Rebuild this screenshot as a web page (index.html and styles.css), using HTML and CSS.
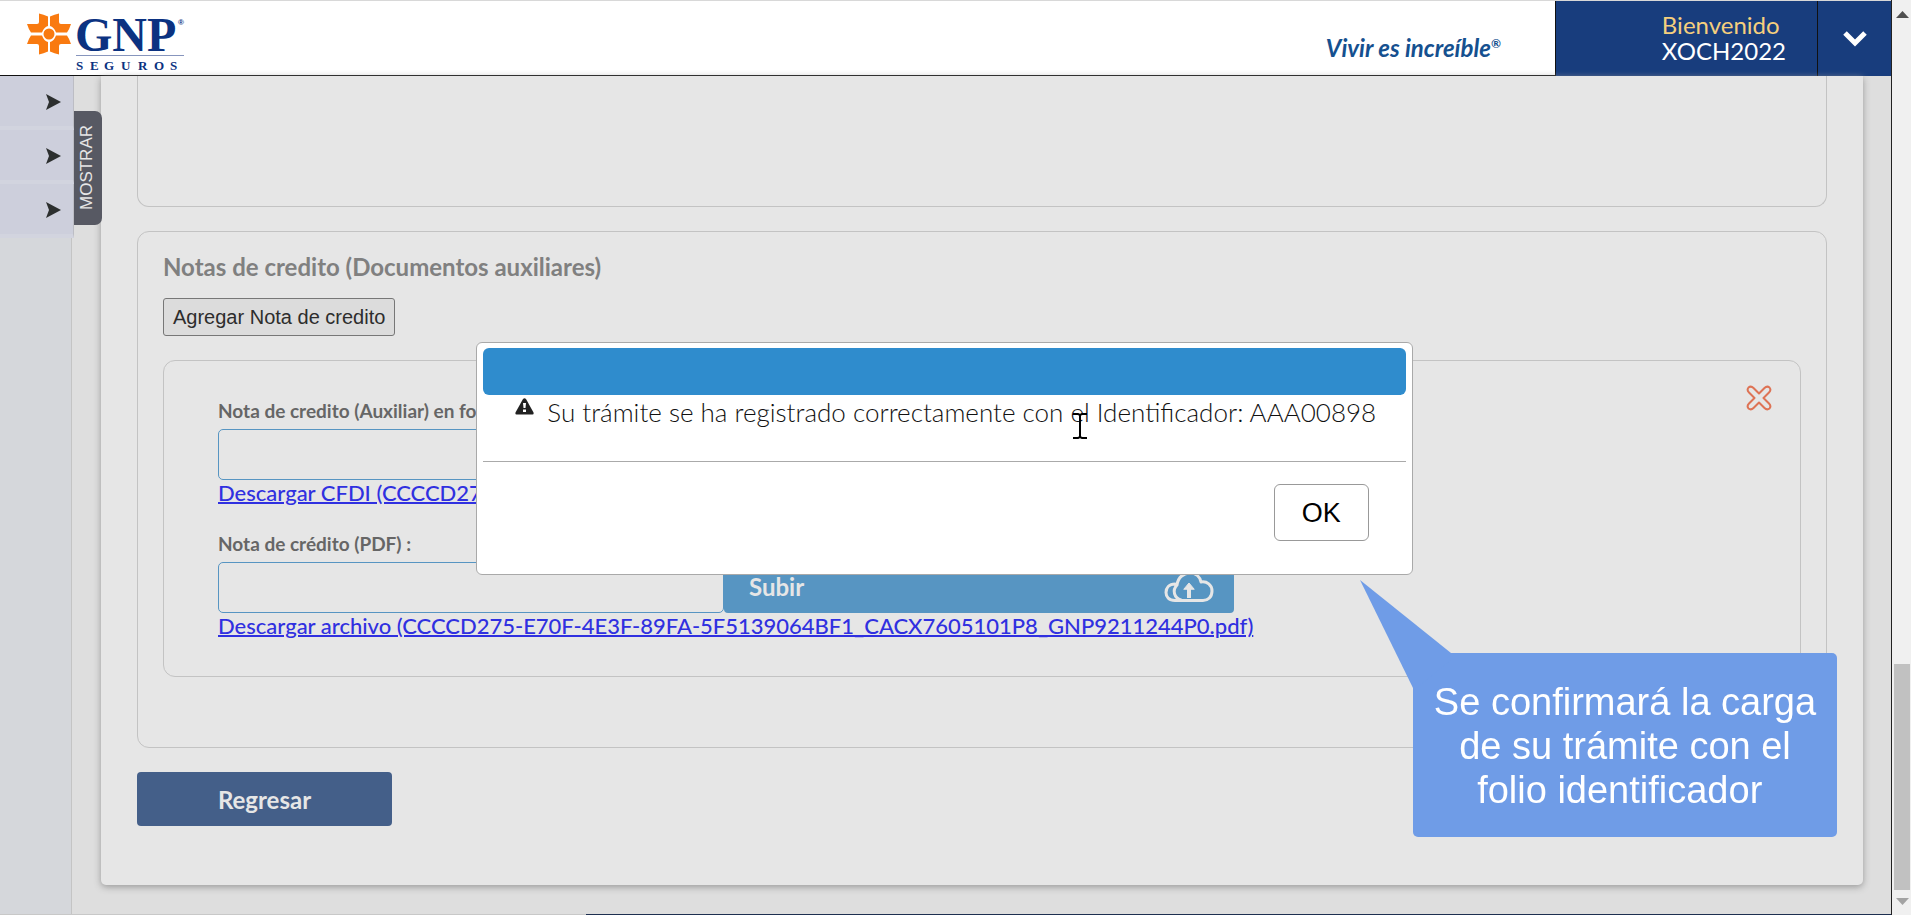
FILE: index.html
```html
<!DOCTYPE html>
<html lang="es">
<head>
<meta charset="utf-8">
<title>GNP Seguros</title>
<link rel="stylesheet" href="styles.css">
</head>
<body>
<div class="app">
  <div class="view">
    <header class="topbar">
      <svg class="logo" viewBox="0 0 160 66" role="img" aria-label="GNP Seguros">
        <g fill="#f97a10" transform="translate(22 26)">
          <path d="M-10-20.500Q-5.500-19.500-1-17.500V-8Q-5-7-7-1.500H-18Q-20.500-5-22-10H-12Q-10-10-10-12Z"/>
          <path transform="scale(-1 1)" d="M-10-20.500Q-5.500-19.500-1-17.500V-8Q-5-7-7-1.500H-18Q-20.500-5-22-10H-12Q-10-10-10-12Z"/>
          <path transform="scale(1 -1)" d="M-10-20.500Q-5.500-19.500-1-17.500V-8Q-5-7-7-1.500H-18Q-20.500-5-22-10H-12Q-10-10-10-12Z"/>
          <path transform="scale(-1 -1)" d="M-10-20.500Q-5.500-19.500-1-17.500V-8Q-5-7-7-1.500H-18Q-20.500-5-22-10H-12Q-10-10-10-12Z"/>
          <circle r="5.500"/>
        </g>
        <text class="logo-name" x="48" y="43">GNP</text>
        <text class="logo-mark" x="151" y="17">®</text>
        <path d="M49 47.500H157" stroke="#8795bd"/>
        <text class="logo-sub" x="49 63 77 94 111 127 143" y="62">SEGUROS</text>
      </svg>
      <span class="slogan">Vivir es increíble<sup>®</sup></span>
      <div class="user">
        <div class="user-name"><span class="welcome">Bienvenido</span><span>XOCH2022</span></div>
        <button class="user-menu" aria-label="Menú de usuario">
          <svg width="26" height="18" viewBox="0 0 26 18"><path d="M3 3L13 13L23 3" fill="none" stroke="#fff" stroke-width="5"/></svg>
        </button>
      </div>
    </header>
    <div class="body">
      <nav class="sidebar">
        <button class="side-item" aria-label="Menú 1"><svg width="16" height="16" viewBox="0 0 16 16"><path d="M1 0L16 8L1 16L4 8Z"/></svg></button>
        <button class="side-item" aria-label="Menú 2"><svg width="16" height="16" viewBox="0 0 16 16"><path d="M1 0L16 8L1 16L4 8Z"/></svg></button>
        <button class="side-item" aria-label="Menú 3"><svg width="16" height="16" viewBox="0 0 16 16"><path d="M1 0L16 8L1 16L4 8Z"/></svg></button>
        <button class="side-tab">MOSTRAR</button>
      </nav>
      <main class="card">
        <section class="panel panel-cut"></section>
        <section class="panel panel-notes">
          <h2 class="title">Notas de credito (Documentos auxiliares)</h2>
          <button class="add">Agregar Nota de credito</button>
          <div class="note">
            <div class="fields">
              <div class="field">
                <label for="cfdi">Nota de credito (Auxiliar) en formato XML :</label>
                <div class="upload">
                  <input id="cfdi" type="text">
                  <button class="subir">Subir
                    <svg width="50" height="32" viewBox="0 0 50 32"><use href="#cloud"/></svg>
                  </button>
                </div>
                <a href="#">Descargar CFDI (CCCCD275-E70F-4E3F-89FA-5F5139064BF1.xml)</a>
              </div>
              <div class="field">
                <label for="pdf">Nota de crédito (PDF) :</label>
                <div class="upload">
                  <input id="pdf" type="text">
                  <button class="subir">Subir
                    <svg width="50" height="32" viewBox="0 0 50 32">
                      <g id="cloud" fill="none" stroke="#e6e6e6" stroke-width="3" stroke-linecap="round" stroke-linejoin="round">
                        <path d="M17 29C10 27 8 19 13 14C14 6 20 2 26 2C32 2 36 6 37 11C43 10 48 14 48 20C48 26 44 29.500 39 29.500H11C5 29.500 2 26 2 21.500C2 17 5 13 11 13"/>
                        <path d="M25 27V15" stroke-width="4" stroke-linecap="butt"/>
                        <path d="M20 18L25 12L30 18Z" fill="#e6e6e6" stroke-width="1"/>
                      </g>
                    </svg>
                  </button>
                </div>
                <a href="#">Descargar archivo (CCCCD275-E70F-4E3F-89FA-5F5139064BF1_CACX7605101P8_GNP9211244P0.pdf)</a>
              </div>
            </div>
            <button class="remove" aria-label="Eliminar">
              <svg width="26" height="26" viewBox="0 0 26 26"><path d="M2.500 2.500Q5 .5 7.500 3L13 8.500L18.500 3Q21 .5 23.500 2.500Q25.500 5 23 7.500L17.500 13L23 18.500Q25.500 21 23.500 23.500Q21 25.500 18.500 23L13 17.500L7.500 23Q5 25.500 2.500 23.500Q.5 21 3 18.500L8.500 13L3 7.500Q.5 5 2.500 2.500Z" fill="none" stroke="#de7355" stroke-width="2" stroke-linejoin="round"/></svg>
            </button>
          </div>
        </section>
        <button class="back">Regresar</button>
      </main>
    </div>
    <div class="status"></div>
  </div>
  <div class="scroll" aria-hidden="true">
    <svg width="13" height="7" viewBox="0 0 13 7"><path d="M0 7L6.500 0L13 7Z" fill="#505050"/></svg>
    <div class="thumb"></div>
    <svg width="13" height="7" viewBox="0 0 13 7"><path d="M0 0L6.500 7L13 0Z" fill="#a3a3a3"/></svg>
  </div>
</div>

<div class="overlay">
  <div class="modal" role="dialog" aria-modal="true" aria-labelledby="msg">
    <div class="modal-head"></div>
    <div class="modal-body">
      <svg width="19" height="17" viewBox="0 0 19 17"><path d="M8 1Q9.500-.5 11 1L18.500 14.500Q19 16.500 17.500 16.500H1.500Q0 16.500.5 14.500Z" fill="#222"/><path d="M8 5H11L10.500 10H8.500ZM8 11.500H11V14H8Z" fill="#fff"/></svg>
      <p id="msg">Su trámite se ha registrado correctamente con el Identificador: AAA00898</p>
    </div>
    <div class="modal-foot"><button class="ok">OK</button></div>
    <svg class="cursor" width="14" height="26" viewBox="0 0 14 26"><path d="M0 1H5L7 2L9 1H14M7 2V24M0 25H5L7 24L9 25H14" fill="none" stroke="#000" stroke-width="2"/></svg>
  </div>
</div>

<aside class="callout">
  <svg class="tail" width="91" height="110" viewBox="0 0 91 110"><path d="M0 0L91 73V80L54 110Z" fill="#6f9ce7"/></svg>
  <p>Se confirmará la carga<br>de su trámite con el<br>folio identificador&nbsp;</p>
</aside>
</body>
</html>
```

FILE: styles.css
```css
* { box-sizing: border-box; }
body {
  margin: 0;
  font-family: Lato, "Noto Sans", sans-serif;
  background: #dedede;
  overflow: hidden;
}
button { font: inherit; cursor: pointer; }
p, h2 { margin: 0; }

.app { display: flex; min-height: 100vh; }
.view {
  flex: 1;
  min-width: 0;
  display: flex;
  flex-direction: column;
  border-right: 1px solid #222;
}

/* Header */
.topbar {
  display: flex;
  align-items: stretch;
  background: #fff;
  border-top: 1px solid #d8d8d8;
  border-bottom: 1px solid #111;
  height: 76px;
}
.logo { width: 160px; height: 66px; margin: 7px 0 0 27px; }
.logo-name { font: bold 48px "Liberation Serif", serif; fill: #0b3281; }
.logo-mark { font: bold 8px "Liberation Sans", sans-serif; fill: #0b3281; }
.logo-sub { font: bold 13px "Liberation Serif", serif; fill: #0b3281; }
.slogan {
  margin-left: auto;
  padding: 32px 54px 0 0;
  font-size: 24px;
  font-weight: 700;
  font-style: italic;
  line-height: 30px;
  color: #15508f;
}
.slogan sup { font-size: 12px; line-height: 0; }
.user {
  display: flex;
  margin-bottom: -1px;
  background: #183d7d;
  border-left: 1px solid #111;
  color: #fff;
}
.user-name {
  display: flex;
  flex-direction: column;
  padding: 11px 31px 0 106px;
  font-size: 24px;
  line-height: 26px;
}
.welcome { color: #f5cf7d; }
.user-menu {
  width: 74px;
  padding: 4px 0 0;
  border: 0;
  border-left: 1px solid #111;
  background: #183d7d;
}

/* Page body */
.body { flex: 1; display: flex; }
.sidebar {
  position: relative;
  width: 72px;
  margin-right: 29px;
  background: #d5d7db;
  border-right: 1px solid #c4c4c4;
}
.side-item {
  display: flex;
  width: 74px;
  height: 54px;
  padding: 2px 12px 0 0;
  align-items: center;
  justify-content: flex-end;
  border: 0;
  border-right: 1px solid #bcbdc4;
  border-bottom: 4px solid #d2d4df;
  background: #cdcfdc;
  fill: #2c2f2f;
}
.side-tab {
  position: absolute;
  top: 35px;
  left: 74px;
  width: 28px;
  height: 114px;
  padding: 0 0 0 2px;
  border: 0;
  border-radius: 7px 0 0 7px;
  background: #575963;
  color: #e6e6e6;
  font: 17px "Liberation Sans", sans-serif;
  writing-mode: vertical-rl;
  transform: rotate(180deg);
}
.card {
  flex: 1;
  min-width: 0;
  margin: 0 28px 29px 0;
  padding: 0 36px 59px;
  background: #e6e6e6;
  border-radius: 0 0 5px 5px;
  box-shadow: 0 2px 7px #999;
}
.panel {
  border: 1px solid #c3c3c3;
  border-radius: 12px;
}
.panel-cut {
  height: 131px;
  margin-bottom: 24px;
  border-top: 0;
  border-radius: 0 0 12px 12px;
}
.panel-notes { padding: 19px 25px 70px; }
.title {
  font-size: 24px;
  line-height: 32px;
  color: #808080;
}
.add {
  display: block;
  height: 38px;
  margin: 15px 0 24px;
  padding: 0 9px;
  border: 1px solid #777;
  border-radius: 3px;
  background: #dcdcdc;
  color: #2d2d2d;
  font: 20px "Liberation Sans", sans-serif;
}
.note {
  display: flex;
  justify-content: space-between;
  align-items: flex-start;
  padding: 24px 28px 38px 54px;
  border: 1px solid #c3c3c3;
  border-radius: 12px;
}
.fields { display: grid; gap: 25px; padding-top: 12px; }
.field { display: grid; justify-items: start; }
.field label {
  font-size: 19px;
  font-weight: 700;
  line-height: 28px;
  margin-bottom: 4px;
  color: #666;
}
.field a {
  font-size: 22px;
  font-weight: 500;
  line-height: 25px;
  color: #3030e0;
  text-decoration-thickness: 2px;
}
.upload { display: flex; }
.upload input {
  width: 506px;
  height: 51px;
  padding: 0 12px;
  border: 1px solid #5795c2;
  border-radius: 5px;
  background: transparent;
  font-size: 20px;
}
.subir {
  display: flex;
  align-items: center;
  justify-content: space-between;
  width: 510px;
  height: 51px;
  padding: 0 20px 2px 25px;
  border: 0;
  border-radius: 4px;
  background: #5795c2;
  color: #e6e6e6;
  font-size: 24px;
  font-weight: 700;
}
.remove {
  padding: 0;
  border: 0;
  background: none;
  line-height: 0;
}
.back {
  display: block;
  width: 255px;
  height: 54px;
  margin-top: 24px;
  border: 0;
  border-radius: 4px;
  background: #445f89;
  color: #e6e6e6;
  font-size: 24px;
  font-weight: 700;
}
.status {
  height: 1px;
  background: linear-gradient(90deg, #c8c8c8 31%, #1d2f50 31%);
}

/* Scroll bar */
.scroll {
  width: 19px;
  padding: 11px 1px 10px 2px;
  display: flex;
  flex-direction: column;
  align-items: center;
  background: #f0f0f0;
}
.thumb {
  width: 100%;
  flex: 0 0 226px;
  margin: auto 0 8px;
  background: #c1c1c1;
}

/* Dialog */
.overlay {
  position: fixed;
  inset: 2px 22px 0 0;
  display: flex;
  align-items: center;
  justify-content: center;
}
.modal {
  position: relative;
  width: 49vw;
  padding: 5px 6px 33px;
  border: 1px solid #a9a9a9;
  border-radius: 6px;
  background: #fff;
}
.modal-head {
  height: 47px;
  border-radius: 6px;
  background: #2f8ccd;
}
.modal-body {
  display: flex;
  align-items: flex-start;
  gap: 13px;
  padding: 3px 0 35px 32px;
  border-bottom: 1px solid #aaa;
}
.modal-body p {
  font-size: 26px;
  font-weight: 300;
  line-height: 28px;
  color: #111;
}
.modal-foot {
  display: flex;
  justify-content: flex-end;
  padding: 22px 37px 0;
}
.ok {
  width: 95px;
  height: 57px;
  padding: 2px 0 0;
  border: 1px solid #999;
  border-radius: 6px;
  background: #fff;
  font: 27px "Liberation Sans", sans-serif;
  color: #000;
}
.cursor { position: absolute; top: 70px; left: 596px; }

/* Callout */
.callout {
  position: fixed;
  right: 74px;
  bottom: 78px;
  width: 424px;
  padding: 27px 0 25px;
  border-radius: 5px;
  background: #6f9ce7;
  color: #fff;
  font: 38px "Liberation Sans", sans-serif;
  line-height: 44px;
  text-align: center;
}
.tail { position: absolute; left: -53px; top: -73px; }
.callout p { position: relative; }
```
